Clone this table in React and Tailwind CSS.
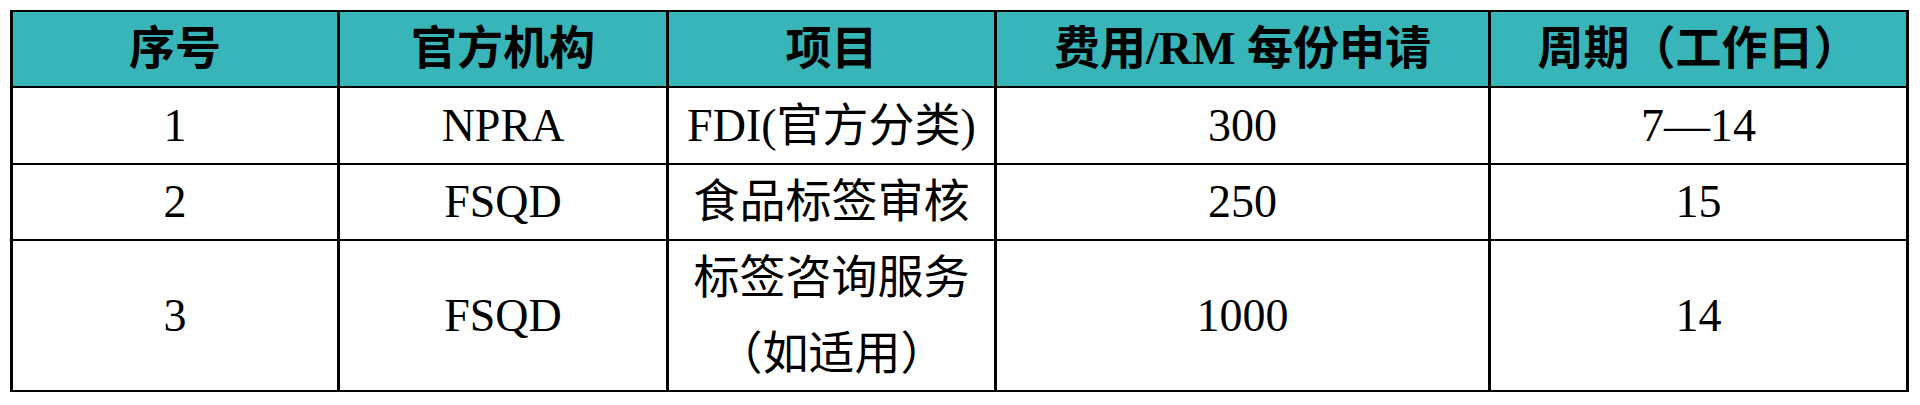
const headers = ["序号", "官方机构", "项目", "费用/RM 每份申请", "周期（工作日）"];

const rows = [
  { h: "h-[77px]", cells: ["1", "NPRA", "FDI(官方分类)", "300", "7—14"] },
  { h: "h-[76px]", cells: ["2", "FSQD", "食品标签审核", "250", "15"] },
  {
    h: "h-[151px]",
    cells: ["3", "FSQD", ["标签咨询服务", "（如适用）"], "1000", "14"],
  },
];

const cell =
  "flex items-center justify-center text-center border-r-[3px] border-b-2 border-black";

export default function App() {
  return (
    <div className="min-h-screen bg-white pt-[10px] pl-[10px]">
      <div
        className="grid w-fit grid-cols-[327px_329px_328px_494px_418px] border-l-[3px] border-t-2 border-black text-[46px] text-black"
        style={{ fontFamily: '"Liberation Serif", "Noto Sans CJK SC", serif' }}>
        {/* Header */}
        {headers.map((h) => (
          <div
            key={h}
            className={`${cell} h-[76px] bg-[#38b5b8] font-bold leading-none`}>
            {h}
          </div>
        ))}

        {/* Body */}
        {rows.map((row) =>
          row.cells.map((c, i) => (
            <div key={`${row.cells[0]}-${i}`} className={`${cell} ${row.h}`}>
              {Array.isArray(c) ? (
                <div className="leading-[76px]">
                  {c.map((line) => (
                    <div key={line}>{line}</div>
                  ))}
                </div>
              ) : (
                <span className="leading-none">{c}</span>
              )}
            </div>
          ))
        )}
      </div>
    </div>
  );
}
